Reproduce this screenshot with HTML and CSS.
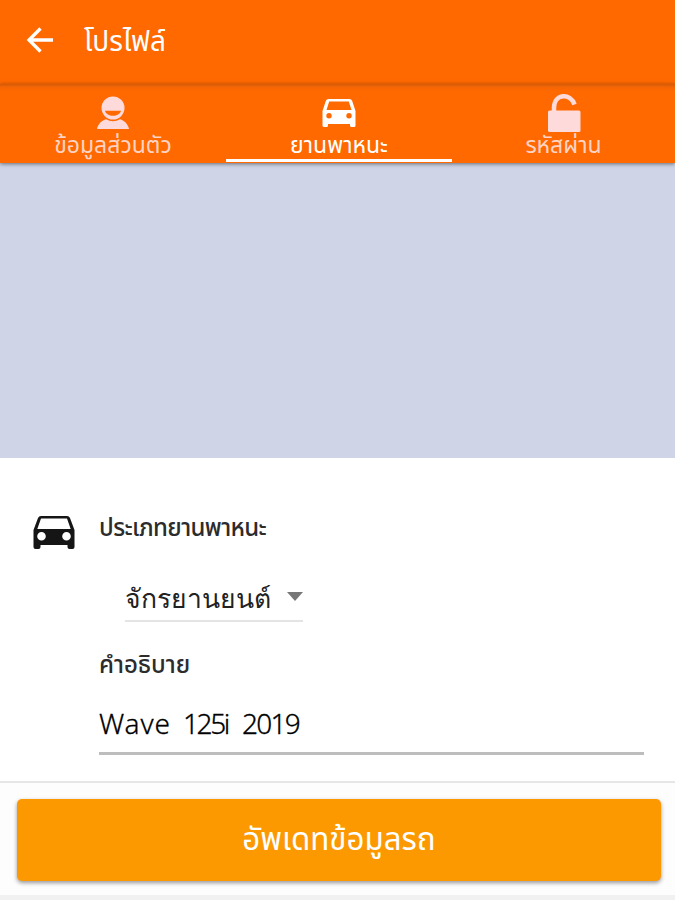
FILE: index.html
```html
<!DOCTYPE html>
<html lang="th">
<head>
<meta charset="utf-8">
<title>โปรไฟล์</title>
<link rel="stylesheet" href="styles.css">
</head>
<body>
<header class="appbar">
  <svg class="back" viewBox="0 0 28 28"><path d="M27 14H3M14.500 2.500 3 14l11.500 11.500"/></svg>
  <h1 class="title">โปรไฟล์</h1>
</header>
<nav class="tabs">
  <a class="tab">
    <svg class="tab-icon" viewBox="0 0 36 38"><path fill-rule="evenodd" d="M18 2.500a11.500 11.500 0 0 1 0 23A11.500 11.500 0 0 1 18 2.500ZM10 16.800h16C24.500 23.500 11.500 23.500 10 16.800Z"/><path d="M2 35C3 29.500 7 26.500 11 25.200Q18 29.500 25 25.200C29 26.500 33 29.500 34 35Z"/></svg>
    <span class="label label-info">ข้อมูลส่วนตัว</span>
  </a>
  <a class="tab active">
    <svg class="tab-icon" viewBox="0 0 36 38"><path fill-rule="evenodd" d="M7.500 5h21q2 0 2.700 2L34.500 17V31.500q0 1.500-1.500 1.500h-2.500q-1.500 0-1.500-1.500v-1.500H7V31.500q0 1.500-1.500 1.500H3q-1.500 0-1.500-1.500V17L4.800 7q.7-2 2.700-2ZM8.200 7.500 5.500 16h25L27.800 7.500ZM8 19a2.700 2.700 0 1 0 0 5.400 2.700 2.700 0 0 0 0-5.400ZM28 19a2.700 2.700 0 1 0 0 5.400 2.700 2.700 0 0 0 0-5.400Z"/></svg>
    <span class="label label-car">ยานพาหนะ</span>
  </a>
  <a class="tab">
    <svg class="tab-icon" viewBox="0 0 36 38"><rect x="2" y="16.500" width="32.500" height="21.500" rx="1.500"/><path class="shackle" d="M8 17.500V14C8-1 25-1 28.500 10.500"/></svg>
    <span class="label label-pass">รหัสผ่าน</span>
  </a>
</nav>
<div class="banner"></div>
<main class="form">
  <svg class="car" viewBox="0 0 42 36"><path fill-rule="evenodd" d="M8 1h26q2.200 0 3 2L41.500 15v17q0 2-2 2h-3q-2 0-2-2v-2H7.500v2q0 2-2 2h-3q-2 0-2-2V15L5 3q.8-2 3-2ZM8 3.500 4.300 14h33.400L34 3.500ZM8.500 17a4.300 4.300 0 1 0 0 8.600 4.300 4.300 0 0 0 0-8.600ZM33.500 17a4.300 4.300 0 1 0 0 8.600 4.300 4.300 0 0 0 0-8.600Z"/></svg>
  <div class="fields">
    <h2 class="heading">ประเภทยานพาหนะ</h2>
    <div class="select"><span class="value">จักรยานยนต์</span><i class="caret"></i></div>
    <h2 class="heading desc">คำอธิบาย</h2>
    <div class="input"><span class="word">Wave</span> <span class="engine">125i</span> <span class="year">2019</span></div>
  </div>
</main>
<footer class="footer"><button class="submit">อัพเดทข้อมูลรถ</button></footer>
</body>
</html>
```
FILE: styles.css
```css
* { box-sizing: border-box; }
body {
  margin: 0;
  height: 900px;
  display: flex;
  flex-direction: column;
  overflow: hidden;
  background: #f1f1f1;
  font-family: "Noto Sans Thai", "Noto Sans", sans-serif;
  font-weight: 400;
}
h1, h2 { margin: 0; }
.appbar {
  height: 84px;
  flex: none;
  display: flex;
  align-items: center;
  padding: 0 0 5px 26px;
  background: #ff6900;
  color: #fff;
}
.back { width: 28px; height: 28px; fill: none; stroke: #fff; stroke-width: 3.3; }
.title { margin-left: 30px; padding-top: 7px; font-size: 28px; font-weight: 400; line-height: 40px; white-space: nowrap; }
.tabs {
  height: 79px;
  flex: none;
  display: grid;
  grid-template-columns: 226px 226px 1fr;
  background: linear-gradient(#d45a08, #f36505 3px, #ff6900 7px);
  box-shadow: 0 1px 4px rgba(0, 0, 0, .5);
  z-index: 1;
}
.tab {
  display: flex;
  flex-direction: column;
  align-items: center;
  padding-top: 10px;
  color: #ffd3c4;
  fill: #ffdadb;
  border-bottom: 3px solid transparent;
}
.active { height: 78px; color: #fff; fill: #fff; border-color: #fff; }
.tab-icon { width: 36px; height: 38px; flex: none; overflow: visible; }
.shackle { fill: none; stroke: #ffdadb; stroke-width: 4.5; }
.label { height: 27px; font-size: 23px; line-height: 28px; white-space: nowrap; }
.banner { height: 295px; flex: none; background: #cfd5e6; }
.form { height: 323px; flex: none; display: flex; align-items: flex-start; padding: 57px 31px 0 33px; background: #fff; }
.car { width: 42px; height: 36px; fill: #151515; flex: none; }
.fields { flex: 1; margin-left: 24px; }
.heading { height: 36px; margin-top: -5px; font-size: 24px; font-weight: 500; line-height: 38px; letter-spacing: -.6px; color: #2c2c2c; white-space: nowrap; }
.select {
  width: 178px;
  height: 48px;
  margin: 28px 0 0 26px;
  padding-bottom: 4px;
  display: flex;
  align-items: center;
  justify-content: space-between;
  border-bottom: 2px solid #e4e4e4;
  color: #222;
}
.value { padding-top: 8px; font-family: "Liberation Sans", sans-serif; font-size: 26.500px; font-weight: 400; line-height: 36px; white-space: nowrap; }
.caret { margin-top: 3px; border: 8px solid transparent; border-top: 9px solid #777; border-bottom: 0; }
.desc { margin-top: 25px; letter-spacing: 0; }
.input { display: flex; height: 63px; margin-top: 9px; padding-top: 13px; border-bottom: 3px solid #bdbdbd; font-size: 28px; font-weight: 300; line-height: 41px; color: #000; white-space: nowrap; -webkit-text-stroke: .3px #000; }
.word { width: 84px; letter-spacing: .9px; }
.engine { width: 59px; letter-spacing: -2.4px; }
.year { letter-spacing: -1.7px; }
.footer { height: 114px; flex: none; padding: 16px 14px 0 17px; background: #fdfdfd; border-top: 2px solid #e6e6e6; }
.submit {
  display: block;
  width: 100%;
  height: 82px;
  border: 0;
  border-radius: 5px;
  background: #fd9900;
  box-shadow: 0 2px 4px rgba(0, 0, 0, .4);
  color: #fff;
  font: 400 31.3px/83px "Noto Sans Thai", "Noto Sans", sans-serif;
  padding: 0;
}
```
